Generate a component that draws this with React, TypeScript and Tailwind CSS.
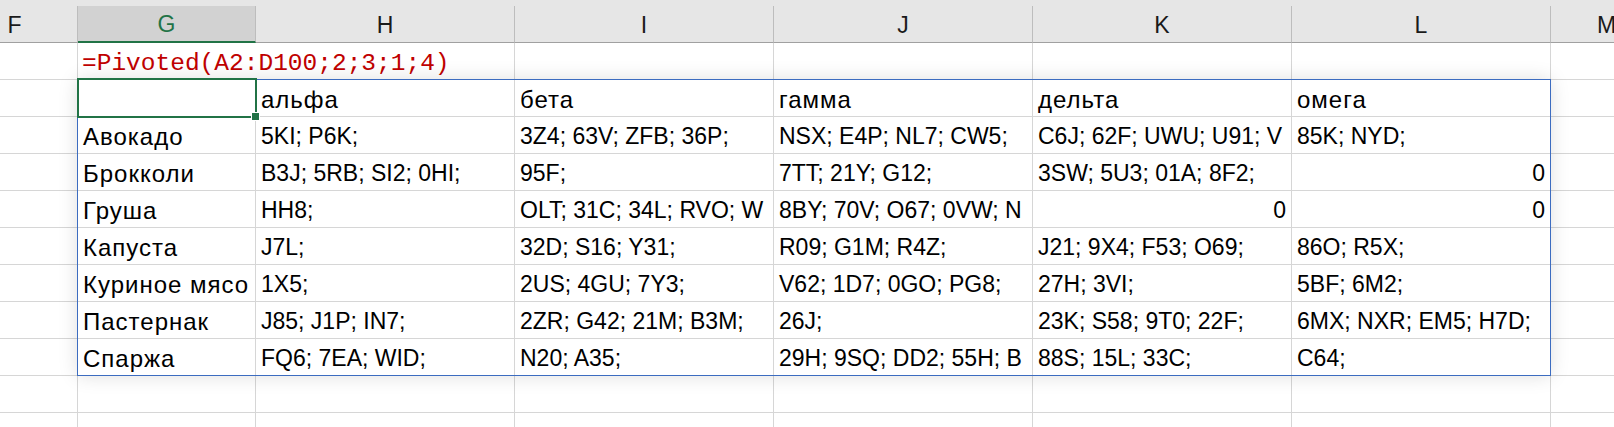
const grid = "border-[#d6d6d6]";

const COLS = [
  { key: "F", w: "w-[126px] -ml-[48px] shrink-0" },
  { key: "G", w: "w-[178px] shrink-0" },
  { key: "H", w: "w-[259px] shrink-0" },
  { key: "I", w: "w-[259px] shrink-0" },
  { key: "J", w: "w-[259px] shrink-0" },
  { key: "K", w: "w-[259px] shrink-0" },
  { key: "L", w: "w-[259px] shrink-0" },
  { key: "M", w: "w-[112px] shrink-0" },
];

type Val = string | number;

// G..L for every row of the spilled range
const ROWS: Val[][] = [
  ["", "альфа", "бета", "гамма", "дельта", "омега"],
  ["Авокадо", "5KI; P6K;", "3Z4; 63V; ZFB; 36P;", "NSX; E4P; NL7; CW5;", "C6J; 62F; UWU; U91; V", "85K; NYD;"],
  ["Брокколи", "B3J; 5RB; SI2; 0HI;", "95F;", "7TT; 21Y; G12;", "3SW; 5U3; 01A; 8F2;", 0],
  ["Груша", "HH8;", "OLT; 31C; 34L; RVO; W", "8BY; 70V; O67; 0VW; N", 0, 0],
  ["Капуста", "J7L;", "32D; S16; Y31;", "R09; G1M; R4Z;", "J21; 9X4; F53; O69;", "86O; R5X;"],
  ["Куриное мясо", "1X5;", "2US; 4GU; 7Y3;", "V62; 1D7; 0GO; PG8;", "27H; 3VI;", "5BF; 6M2;"],
  ["Пастернак", "J85; J1P; IN7;", "2ZR; G42; 21M; B3M;", "26J;", "23K; S58; 9T0; 22F;", "6MX; NXR; EM5; H7D;"],
  ["Спаржа", "FQ6; 7EA; WID;", "N20; A35;", "29H; 9SQ; DD2; 55H; B", "88S; 15L; 33C;", "C64;"],
  ["", "", "", "", "", ""],
  ["", "", "", "", "", ""],
];

const cyr = /[а-яё]/i;

const Cell = ({ w, value }: { w: string; value?: Val }) => {
  const num = typeof value === "number";
  const wide = typeof value === "string" && cyr.test(value);
  return (
    <div
      className={`${w} h-full border-r ${grid} overflow-hidden whitespace-nowrap flex items-center pt-[3px] px-[5px] ${
        num ? "justify-end" : ""
      } ${wide ? "text-[24px] tracking-[1px]" : ""}`}
    >
      {value}
    </div>
  );
};

const HeaderRow = () => (
  <div className="h-[43px] bg-[#e6e6e6] flex items-end">
    {COLS.map((c) =>
      c.key === "G" ? (
        <div
          key={c.key}
          className={`${c.w} h-[37px] bg-[#d2d2d2] border-r border-r-[#bdbdbd] border-b-2 border-b-[#217346] flex items-center justify-center pt-[2px] text-[#217346]`}
        >
          {c.key}
        </div>
      ) : (
        <div
          key={c.key}
          className={`${c.w} h-[37px] border-r border-r-[#bdbdbd] border-b border-b-[#a0a0a0] flex items-center justify-center pt-[2px] text-[#1a1a1a]`}
        >
          {c.key}
        </div>
      )
    )}
  </div>
);

const FormulaRow = () => (
  <div className={`flex h-[37px] border-b ${grid}`}>
    <Cell w={COLS[0].w} />
    <div className={`w-[437px] shrink-0 h-full border-r ${grid} flex items-center pt-[7px] pl-[4px] whitespace-nowrap font-['Liberation_Mono',monospace] text-[24.5px] text-[#c00000]`}>
      =Pivoted(A2:D100;2;3;1;4)
    </div>
    {COLS.slice(3).map((c) => (
      <Cell key={c.key} w={c.w} />
    ))}
  </div>
);

export default function App() {
  return (
    <div className="relative w-[1614px] h-[427px] overflow-hidden bg-white text-black font-['Liberation_Sans',Arial,sans-serif] text-[23px] leading-none">
      <HeaderRow />
      <FormulaRow />
      {ROWS.map((row, i) => (
        <div key={i} className={`flex h-[37px] border-b ${grid}`}>
          <Cell w={COLS[0].w} />
          {row.map((v, j) => (
            <Cell key={j} w={COLS[j + 1].w} value={v} />
          ))}
          <Cell w={COLS[7].w} />
        </div>
      ))}

      {/* spill range outline */}
      <div className="absolute left-[77px] top-[79px] w-[1474px] h-[297px] border border-[#3c6cc0] shadow-[0_0_18px_rgba(0,0,0,0.13)] pointer-events-none" />
      {/* active cell G2 */}
      <div className="absolute left-[77px] top-[78px] w-[180px] h-[40px] border-2 border-[#217346] pointer-events-none" />
      <div className="absolute left-[251px] top-[112px] w-[9px] h-[9px] bg-[#217346] border border-white pointer-events-none" />
    </div>
  );
}
